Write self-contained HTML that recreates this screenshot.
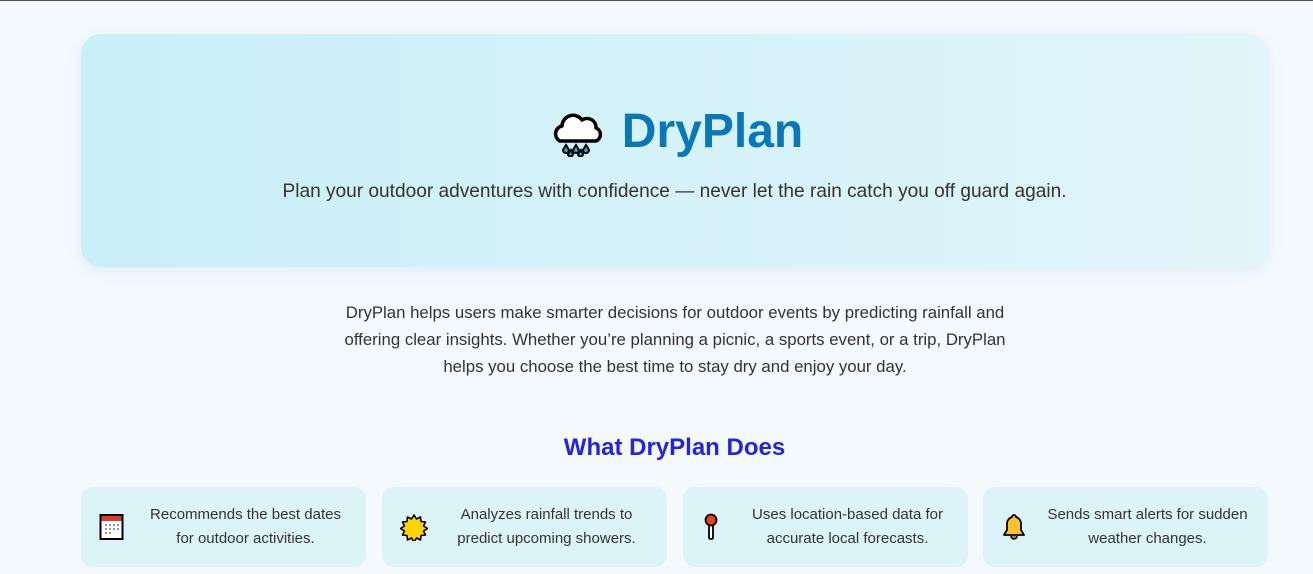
<!DOCTYPE html>
<html><head><meta charset="utf-8"><style>
*{margin:0;padding:0;box-sizing:border-box}
body{width:1313px;height:574px;overflow:hidden;background:#f4f9fe;font-family:"Liberation Sans",Arial,sans-serif;border-top:1px solid #4a4a6a;position:relative}
.hero{position:absolute;left:81px;top:33px;width:1187px;height:233px;border-radius:20px;background:linear-gradient(90deg,#c9eff7,#e1f5fa);box-shadow:0 4px 14px rgba(120,180,200,.18)}
.c{position:absolute;left:81px;width:1187px;text-align:center}
.title{top:103px;font-size:48px;font-weight:bold;color:#0a78b8;line-height:56px;padding-left:4px}
.title svg{vertical-align:-10px;margin-right:18px}
.sub{top:180px;font-size:19.1px;color:#333}
.desc{position:absolute;left:335px;width:680px;top:298px;text-align:center;font-size:16.8px;line-height:27px;color:#333}
h2{top:433px;font-size:24px;color:#2323e0}
.card{position:absolute;top:486px;height:80px;width:285px;border-radius:12px;background:#dcf4f8;font-size:15px;line-height:24px;color:#333}
.card .ic{position:absolute;left:18px;top:26px}
.card .t{position:absolute;left:50px;right:6px;top:16px;text-align:center}
</style></head><body>
<div class="hero"></div>
<div class="c title"><svg width="54" height="48" viewBox="0 0 54 48"><path d="M10 32 a8 8 0 0 1 2-15 a11 11 0 0 1 20-6 a9 9 0 0 1 14 8 a7 7 0 0 1 0 13 z" fill="#fff" stroke="#000" stroke-width="3.5" stroke-linejoin="round"/><g fill="#2aa8d8" stroke="#000" stroke-width="2"><path d="M16 36 l-3 5 a3 3 0 0 0 6 0z"/><path d="M26 36 l-3 5 a3 3 0 0 0 6 0z"/><path d="M36 36 l-3 5 a3 3 0 0 0 6 0z"/><path d="M21 41 l-3 4 a2.5 2.5 0 0 0 5 0z"/><path d="M31 41 l-3 4 a2.5 2.5 0 0 0 5 0z"/></g></svg>DryPlan</div>
<div class="c sub">Plan your outdoor adventures with confidence — never let the rain catch you off guard again.</div>
<div class="desc">DryPlan helps users make smarter decisions for outdoor events by predicting rainfall and offering clear insights. Whether you’re planning a picnic, a sports event, or a trip, DryPlan helps you choose the best time to stay dry and enjoy your day.</div>
<h2 class="c">What DryPlan Does</h2>
<div class="card" style="left:81px"><svg class="ic" width="26" height="28" viewBox="0 0 26 28"><rect x="1.5" y="2" width="22" height="24" fill="#fff" stroke="#000" stroke-width="2"/><rect x="2.5" y="3" width="20" height="5" fill="#e0392b"/><g fill="#999"><rect x="6" y="11" width="2" height="2"/><rect x="10" y="11" width="2" height="2"/><rect x="14" y="11" width="2" height="2"/><rect x="18" y="11" width="2" height="2"/><rect x="6" y="15" width="2" height="2"/><rect x="10" y="15" width="2" height="2"/><rect x="14" y="15" width="2" height="2"/><rect x="18" y="15" width="2" height="2"/><rect x="6" y="19" width="2" height="2" fill="#d66"/><rect x="10" y="19" width="2" height="2"/></g></svg><div class="t">Recommends the best dates<br>for outdoor activities.</div></div>
<div class="card" style="left:382px"><svg class="ic" width="28" height="28" viewBox="0 0 28 28"><path d="M14 2 l2.5 4 4-2 .5 4.5 4.5 .5-2 4 4 2.5-4 2.5 2 4-4.5.5-.5 4.5-4-2-2.5 4-2.5-4-4 2-.5-4.5-4.5-.5 2-4-4-2.5 4-2.5-2-4 4.5-.5.5-4.5 4 2z" fill="#ffd400" stroke="#000" stroke-width="1.6" stroke-linejoin="round"/></svg><div class="t">Analyzes rainfall trends to<br>predict upcoming showers.</div></div>
<div class="card" style="left:683px"><svg class="ic" width="20" height="28" viewBox="0 0 20 28"><rect x="8" y="10" width="4" height="16" rx="1.5" fill="#fff" stroke="#000" stroke-width="1.8"/><circle cx="10" cy="7" r="5.5" fill="#e8401c" stroke="#000" stroke-width="1.8"/></svg><div class="t">Uses location-based data for<br>accurate local forecasts.</div></div>
<div class="card" style="left:983px"><svg class="ic" width="26" height="28" viewBox="0 0 26 28"><path d="M13 2 a2 2 0 0 1 2 2 a7 7 0 0 1 5 7 v6 l3 5 h-20 l3-5 v-6 a7 7 0 0 1 5-7 a2 2 0 0 1 2-2z" fill="#f9c12e" stroke="#000" stroke-width="1.8" stroke-linejoin="round"/><path d="M10 23 a3 3 0 0 0 6 0" fill="#c58a00" stroke="#000" stroke-width="1.5"/></svg><div class="t">Sends smart alerts for sudden<br>weather changes.</div></div>
</body></html>
